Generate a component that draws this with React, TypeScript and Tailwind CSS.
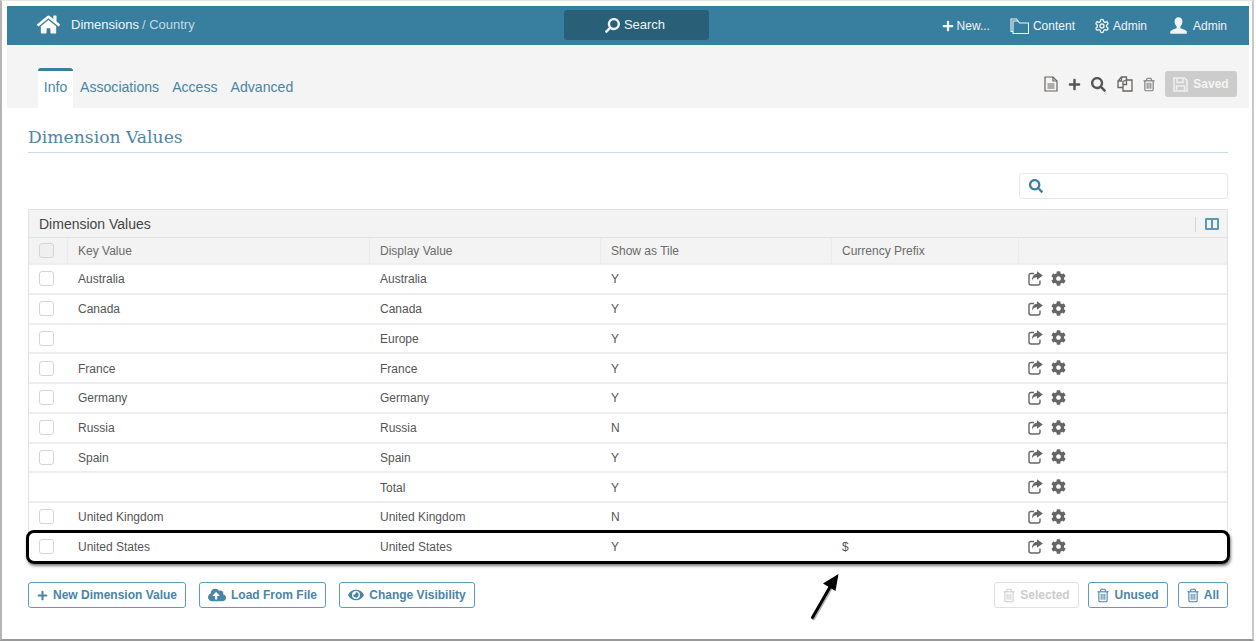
import React from "react";
import { FaHome, FaPlus, FaSearch, FaCog, FaCloudUploadAlt, FaEye } from "react-icons/fa";
import { LuSettings } from "react-icons/lu";

const rows = [
  ["Australia", "Australia", "Y", "", true],
  ["Canada", "Canada", "Y", "", true],
  ["", "Europe", "Y", "", true],
  ["France", "France", "Y", "", true],
  ["Germany", "Germany", "Y", "", true],
  ["Russia", "Russia", "N", "", true],
  ["Spain", "Spain", "Y", "", true],
  ["", "Total", "Y", "", false],
  ["United Kingdom", "United Kingdom", "N", "", true],
  ["United States", "United States", "Y", "$", true],
] as const;

function Trash({ className }: { className?: string }) {
  return (
    <svg className={className} viewBox="0 0 13 15" fill="none" stroke="currentColor">
      <path d="M0.5 3.5H12.5" strokeWidth="1.2" />
      <path d="M4 3.2V1.8Q4 0.8 5 0.8H8Q9 0.8 9 1.8V3.2" strokeWidth="1.2" />
      <path d="M2 3.5V13Q2 14.3 3.2 14.3H9.8Q11 14.3 11 13V3.5" strokeWidth="1.2" />
      <path d="M4.5 5.5V12M6.5 5.5V12M8.5 5.5V12" strokeWidth="1.1" />
    </svg>
  );
}

function Share({ className }: { className?: string }) {
  return (
    <svg className={className} viewBox="0 0 15 15" fill="none">
      <path d="M6 2.5H3Q1 2.5 1 4.5V12Q1 14 3 14H10Q12 14 12 12V9.5" stroke="currentColor" strokeWidth="1.4" />
      <path d="M9 0.3L14.8 4.6L9 8.8V6.3C6.6 6.3 5 7.2 4 9.6C4 5.6 5.8 3 9 2.8Z" fill="currentColor" />
    </svg>
  );
}

function Doc({ className }: { className?: string }) {
  return (
    <svg className={className} viewBox="0 0 14 16" fill="none" stroke="currentColor">
      <path d="M1 1H9L13 5V15H1Z" strokeWidth="1.2" />
      <path d="M9 1V5H13" strokeWidth="1.2" />
      <path d="M3.5 8H10.5M3.5 10H10.5M3.5 12H10.5" strokeWidth="1.2" />
    </svg>
  );
}

function CopyIcon({ className }: { className?: string }) {
  return (
    <svg className={className} viewBox="0 0 16 16" fill="none" stroke="currentColor" strokeWidth="1.3">
      <path d="M6 11.5H1V5L4.5 1H9.5V4" />
      <path d="M1 5H4.5V1" />
      <path d="M6 5.5L9.5 4H15V15H6Z" />
      <path d="M6 8.5H9.5V4.5" />
    </svg>
  );
}

function Folder({ className }: { className?: string }) {
  return (
    <svg className={className} viewBox="0 0 19 16" fill="none" stroke="currentColor" strokeWidth="1.1">
      <path d="M3 15V3H8L9.5 5H18.5V15.5H3Z" />
      <path d="M3 13.5H1V1H6.5L8 3" />
    </svg>
  );
}

function UserIcon({ className }: { className?: string }) {
  return (
    <svg className={className} viewBox="0 0 17 17" fill="currentColor">
      <path d="M8.5 0.3C11 0.3 12.4 2.2 12.4 4.6C12.4 6.6 11.5 8.4 10.4 9.5V11.2C12 12 16.3 12.8 16.8 14.6V16.7H0.2V14.6C0.7 12.8 5 12 6.6 11.2V9.5C5.5 8.4 4.6 6.6 4.6 4.6C4.6 2.2 6 0.3 8.5 0.3Z" />
    </svg>
  );
}

function SaveIcon({ className }: { className?: string }) {
  return (
    <svg className={className} viewBox="0 0 15 15" fill="none" stroke="currentColor" strokeWidth="1.6">
      <path d="M1 1H11.5L14 3.5V14H1Z" />
      <path d="M4 1V5.5H10V1" />
      <path d="M3.5 14V9H11.5V14" />
    </svg>
  );
}

function Btn({ icon, label, disabled, className }: { icon: React.ReactNode; label: string; disabled?: boolean; className?: string }) {
  return (
    <div className={`h-[26px] flex items-center justify-center gap-[5px] rounded-[3px] border bg-white text-[12px] font-bold ${disabled ? "border-[#e0e0e0] text-[#cccccc]" : "border-[#5c9db8] text-[#4a85a5]"} ${className ?? ""}`}>
      {icon}
      <span>{label}</span>
    </div>
  );
}

function Box({ shaded }: { shaded?: boolean }) {
  return <div className={`w-[15px] h-[15px] rounded-[3px] border border-[#d5d5d5] ${shaded ? "bg-[#efefef]" : "bg-white"}`} />;
}

export default function App() {
  return (
    <div className="relative w-[1256px] h-[642px] overflow-hidden bg-white text-[#555555] font-['Liberation_Sans',Arial,sans-serif]">
      <div className="absolute left-0 top-0 w-[1254px] h-[641px] border-l-2 border-b-2 border-r-2 border-t border-l-[#b5b5b5] border-b-[#999999] border-r-[#c8c8c8] border-t-[#e5e5e5]" />
      <div className="pt-[6px] pl-[7px] pr-[7px]">
        <div className="h-[39px] bg-[#377e9f] flex items-center text-white relative text-[13px]">
          <FaHome className="ml-[30px] w-[23px] h-[23px] text-white -mt-[2px]" />
          <span className="ml-[11px] text-[#f2f6f8] -mt-[1px]">Dimensions</span>
          <span className="ml-[3px] text-[#c4d9e3] -mt-[1px]">/ Country</span>
          <div className="absolute left-[557px] top-[4px] w-[145px] h-[30px] rounded-[3px] bg-[#2a5f78] flex items-center justify-center gap-[4px] text-[13px] text-[#eef3f6] pr-[3px]">
            <FaSearch className="w-[15px] h-[15px] -scale-x-100" />
            <span>Search</span>
          </div>
          <div className="ml-auto flex items-center text-[12px] text-[#f0f5f8] pr-[22px]">
            <FaPlus className="w-[12px] h-[12px] mr-[3px]" />
            <span>New...</span>
            <Folder className="ml-[20px] w-[19px] h-[16px] mr-[4px]" />
            <span>Content</span>
            <LuSettings className="ml-[19px] w-[16px] h-[16px] mr-[3px]" />
            <span>Admin</span>
            <UserIcon className="ml-[23px] w-[17px] h-[17px] mr-[6px] -mt-[1px]" />
            <span>Admin</span>
          </div>
        </div>
        <div className="h-[63px] bg-[#f4f4f4] relative flex items-end pl-[31px]">
          <div className="w-[35px] h-[40px] bg-white border-t-[3px] border-[#377e9f] rounded-t-[3px] text-[14px] text-[#4a85a5] flex justify-center pt-[6px]">Info</div>
          <div className="flex gap-[13px] text-[14.1px] text-[#4a85a5] h-[40px] pt-[9px] ml-[7px]">
            <span>Associations</span>
            <span>Access</span>
            <span>Advanced</span>
          </div>
          <div className="absolute right-[12px] top-[26px] flex items-center">
            <Doc className="w-[14px] h-[16px] mr-[10px] text-[#6b6360]" />
            <FaPlus className="w-[13px] h-[13px] mr-[10px] text-[#555555]" />
            <FaSearch className="w-[15px] h-[15px] mr-[11px] text-[#555555]" />
            <CopyIcon className="w-[16px] h-[16px] mr-[10px] text-[#6b6360]" />
            <Trash className="w-[12px] h-[15px] mr-[10px] text-[#777777]" />
            <div className="w-[72px] h-[26px] rounded-[3px] bg-[#cccccc] text-[#f4f4f4] text-[12px] font-bold flex items-center justify-center gap-[5px]">
              <SaveIcon className="w-[15px] h-[15px] text-[#eeeeee]" />
              <span>Saved</span>
            </div>
          </div>
        </div>
      </div>

      <div className="px-[28px]">
        <div className="mt-[17px] h-[28px] border-b border-[#c9dde8] text-[17.2px] leading-[24px] text-[#4f86a6] font-['DejaVu_Serif',serif]">
          Dimension Values
        </div>
        <div className="flex justify-end mt-[20px]">
          <div className="w-[209px] h-[26px] border border-[#e8e8e8] rounded-[3px] flex items-center pl-[9px]">
            <FaSearch className="w-[14px] h-[14px] text-[#377e9f]" />
          </div>
        </div>
        <div className="mt-[10px] border border-[#e2e2e2] border-b-0">
          <div className="h-[28px] bg-[#f3f3f3] border-b border-[#e2e2e2] flex items-center pl-[10px] pr-[8px] pt-[1px] text-[14px] text-[#444444]">
            <span>Dimension Values</span>
            <div className="ml-auto w-px h-[15px] bg-[#d5d5d5] mr-[9px]" />
            <div className="w-[14px] h-[12px] border-2 border-[#5c97b8] rounded-[1px] flex justify-center">
              <div className="w-[2px] h-full bg-[#5c97b8]" />
            </div>
          </div>
          <div className="h-[25px] bg-[#f3f3f3] flex text-[12px] text-[#6a6a6a]">
            <div className="w-[39px] flex items-center pl-[10px] border-r border-[#ebebeb]"><Box shaded /></div>
            <div className="w-[302px] flex items-center pl-[10px] border-r border-[#ebebeb]">Key Value</div>
            <div className="w-[231px] flex items-center pl-[10px] border-r border-[#ebebeb]">Display Value</div>
            <div className="w-[231px] flex items-center pl-[10px] border-r border-[#ebebeb]">Show as Tile</div>
            <div className="w-[187px] flex items-center pl-[10px] border-r border-[#ebebeb]">Currency Prefix</div>
          </div>
          {rows.map((r, i) => (
            <div key={i} className="h-[29.75px] border-t-2 border-[#eeeeee] flex items-center text-[12px] text-[#555555]">
              <div className="w-[39px] pl-[10px]">{r[4] ? <Box /> : null}</div>
              <div className="w-[302px] pl-[10px] pt-[1px]">{r[0]}</div>
              <div className="w-[231px] pl-[10px] pt-[1px]">{r[1]}</div>
              <div className="w-[231px] pl-[10px] pt-[1px]">{r[2]}</div>
              <div className="w-[187px] pl-[10px] pt-[1px]">{r[3]}</div>
              <div className="pl-[9px] flex items-center gap-[8px] text-[#666666] -mt-[1px]">
                <Share className="w-[15px] h-[15px]" />
                <FaCog className="w-[15px] h-[15px]" />
              </div>
            </div>
          ))}
        </div>
        <div className="mt-[21.5px] flex items-center">
          <Btn className="w-[158px]" icon={<FaPlus className="w-[11px] h-[11px]" />} label="New Dimension Value" />
          <Btn className="w-[127px] ml-[13px]" icon={<FaCloudUploadAlt className="w-[18px] h-[16px]" />} label="Load From File" />
          <Btn className="w-[136px] ml-[13px]" icon={<FaEye className="w-[16px] h-[14px]" />} label="Change Visibility" />
          <Btn disabled className="w-[85px] ml-auto" icon={<Trash className="w-[12px] h-[15px]" />} label="Selected" />
          <Btn className="w-[80px] ml-[9px]" icon={<Trash className="w-[12px] h-[15px]" />} label="Unused" />
          <Btn className="w-[50px] ml-[10px]" icon={<Trash className="w-[12px] h-[15px]" />} label="All" />
        </div>
      </div>

      <div className="absolute left-[26px] top-[530px] w-[1204px] h-[34px] rounded-[8px] border-[3px] border-black shadow-[1px_2px_3px_rgba(0,0,0,0.5)]" />
      <svg className="absolute left-[805px] top-[570px]" width="40" height="55" viewBox="0 0 40 55">
        <path d="M7.5 47.5 L25 17" stroke="#666" strokeWidth="3" strokeLinecap="round" transform="translate(1 1.5)" opacity="0.5" />
        <path d="M7.5 47.5 L25 17" stroke="#000" strokeWidth="3" strokeLinecap="round" />
        <path d="M33.5 4 L18 13.5 L30.5 21 Z" fill="#000" />
      </svg>
    </div>
  );
}
